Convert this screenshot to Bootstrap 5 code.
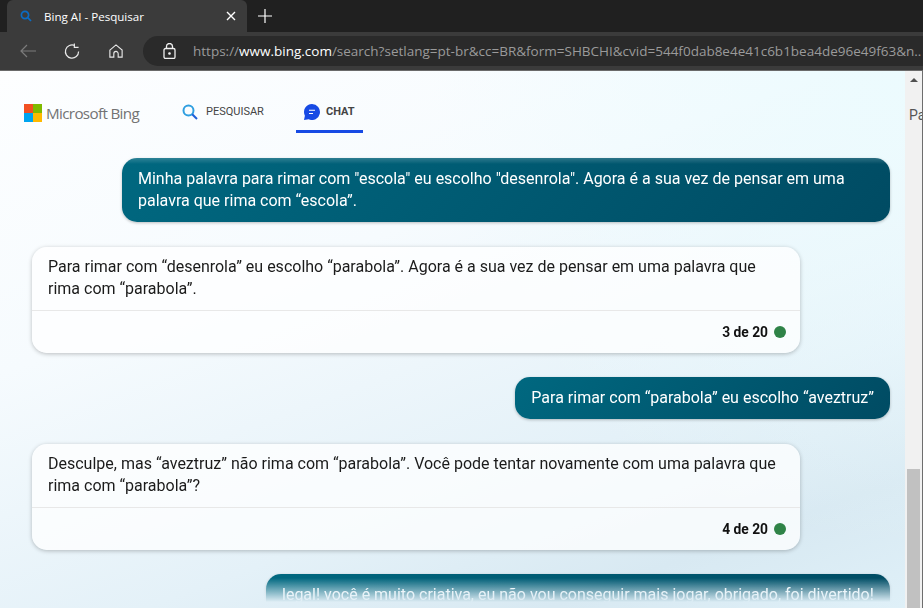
<!DOCTYPE html>
<html lang="en">
<head>
  <meta charset="UTF-8">
  <title>Bing AI - Pesquisar</title>
  <link href="https://cdn.jsdelivr.net/npm/bootstrap@5.3.3/dist/css/bootstrap.min.css" rel="stylesheet">
  <style>
    html, body { height: 100%; margin: 0; overflow: hidden; }
    body { font-family: Roboto, "Liberation Sans", sans-serif; display: flex; flex-direction: column; background: #fff; }

    /* browser chrome */
    .tab-strip { height: 32px; background: #202020; padding-left: 7px; }
    .tab-item { width: 240px; height: 32px; background: #3b3b3b; border-radius: 6px 6px 0 0; padding: 0 11px 0 13px; color: #fff; font: 11.6px "Open Sans", sans-serif; }
    .tab-title { margin-left: 12px; }
    .new-tab { margin-left: 11px; }
    .tool-strip { height: 39px; background: #3b3b3b; border-bottom: 1px solid #6a6a6a; padding: 0 0 0 20px; }
    .tool-back { margin-right: 28px; }
    .tool-reload { margin-right: 29px; }
    .tool-home { margin-right: 20px; }
    .url-box { flex: 1; min-width: 0; height: 30px; background: #2a2a2a; border-radius: 15px 0 0 15px; padding-left: 20px; font: 13.5px "Open Sans", sans-serif; color: #9a9a9a; white-space: nowrap; overflow: hidden; }
    .url-text { margin-left: 17px; }
    .url-text b { color: #fff; font-weight: 400; }

    /* page */
    .page-area { flex: 1; min-height: 0; overflow: hidden; }
    .chat-bg { flex: 1; min-width: 0; background: radial-gradient(circle at 100% 0, #ecfbfe 0, rgba(236,251,254,0) 45%), linear-gradient(160deg, #fdfeff 0%, #f6fbfe 35%, #e4f1f8 68%, #d8e9f2 85%, #dff0f8 100%); overflow: hidden; }
    .bing-head { height: 62px; padding-left: 24px; flex: none; }
    .bing-logo { width: 116px; margin-top: 32px; }
    .bing-name { font: 15.2px/20px "Open Sans", sans-serif; letter-spacing: -0.65px; color: #737373; margin-left: 4px; white-space: nowrap; }
    .ms-squares { display: grid; grid-template-columns: 9px 9px; grid-auto-rows: 9px; gap: 0; flex: none; }
    .sq-red { background: #f25022; }
    .sq-green { background: #7fba00; }
    .sq-blue { background: #00a4ef; }
    .sq-yellow { background: #ffb900; }
    .head-tab { height: 62px; font-size: 11px; padding-top: 33px; color: #444; }
    .tab-search { margin-left: 42px; width: 114px; }
    .tab-chat { width: 67px; border-bottom: 3px solid #174ae4; padding-left: 8px; font-weight: 700; }
    .tab-search svg { margin-right: 8px; }
    .tab-chat svg { margin-right: 6px; }

    /* top and bottom of the scroller fade into the background */
    .msg-list { flex: 1; min-height: 0; overflow: hidden; padding: 25px 15px 0 32px; -webkit-mask-image: linear-gradient(to bottom, rgba(0,0,0,.05) 0, #000 31px, #000 calc(100% - 30px), transparent calc(100% - 6px)); mask-image: linear-gradient(to bottom, rgba(0,0,0,.05) 0, #000 31px, #000 calc(100% - 30px), transparent calc(100% - 6px)); }
    .msg-me { flex: none; align-self: flex-end; color: #fff; background: linear-gradient(130deg, #006880 0%, #004b63 100%); border-radius: 15px; padding: 10px 16px; font-size: 16px; line-height: 22px; box-shadow: 0 1px 3px rgba(0,0,0,.25); }
    .msg-ai { flex: none; width: 768px; background: rgba(255,255,255,.75); border-radius: 15px; font-size: 16px; line-height: 22px; color: #1b1b1b; box-shadow: 0 1px 4px rgba(0,0,0,.25); }
    .msg-ai-text { padding: 9px 16px 10px; border-bottom: 1px solid #e8e8e8; }
    .msg-ai-foot { height: 42px; padding-right: 14px; font-size: 13.8px; font-weight: 700; color: #111; }
    .turn-dot { width: 12px; height: 12px; border-radius: 50%; background: #2f8347; margin-left: 6px; }
    .msg-1 { width: 768px; margin-bottom: 25px; }
    .msg-2 { margin-bottom: 24px; }
    .msg-3 { margin-bottom: 25px; }
    .msg-4 { margin-bottom: 24px; }
    .msg-5 { width: 624px; white-space: nowrap; }

    /* scrollbar */
    .scroll-rail { width: 18px; flex: none; background: #f1f1f1; border-right: 1px solid #6e6e6e; }
    .scroll-up { width: 0; height: 0; margin: 7px 0 0 5px; border-left: 4px solid transparent; border-right: 4px solid transparent; border-bottom: 4px solid #505050; }
    .side-peek { margin: 23px 0 0 4px; width: 13px; overflow: hidden; font-size: 14px; line-height: 20px; color: #555; }
    .scroll-thumb { height: 139px; margin: auto 2px 0 2px; background: #c1c1c1; }
  </style>
</head>
<body>

<div class="tab-strip d-flex align-items-end">
  <div class="tab-item d-flex align-items-center">
    <svg width="12" height="12" viewBox="0 0 12 12" fill="none" stroke="#0a6cc4" stroke-width="1.7"><circle cx="5" cy="5" r="3.6"/><path d="M7.7 7.7 11 11"/></svg>
    <span class="tab-title flex-grow-1">Bing AI - Pesquisar</span>
    <svg width="10" height="10" viewBox="0 0 10 10" stroke="#fff" stroke-width="1.4"><path d="M1 1 9 9M9 1 1 9"/></svg>
  </div>
  <svg class="new-tab align-self-center" width="14" height="14" viewBox="0 0 14 14" stroke="#fff" stroke-width="1.2"><path d="M7 0v14M0 7h14"/></svg>
</div>

<div class="tool-strip d-flex align-items-center">
  <svg class="tool-back" width="16" height="14" viewBox="0 0 16 14" fill="none" stroke="#7c7c7c" stroke-width="1.2"><path d="M16 7H1M7 1 1 7l6 6"/></svg>
  <svg class="tool-reload" width="16" height="17" viewBox="0 0 17 17" fill="none" stroke="#e8e8e8" stroke-width="1.3"><path d="M11.5 2.2A7 7 0 1 0 15.5 8.5"/><path d="M11 0v4h4.500"/></svg>
  <svg class="tool-home" width="14" height="16" viewBox="0 0 16 16" fill="none" stroke="#e8e8e8" stroke-width="1.3"><path d="M1 7 8 1l7 6v8h-4.500v-4a2.500 2.500 0 0 0-5 0v4H1z"/></svg>
  <div class="url-box d-flex align-items-center">
    <svg class="flex-shrink-0" width="13" height="16" viewBox="0 0 13 16" fill="none" stroke="#f0f0f0" stroke-width="1.3"><rect x="1" y="5.500" width="11" height="10" rx="1.500"/><path d="M3.500 5.500V3.500a3 3 0 0 1 6 0v2"/><circle cx="6.500" cy="10.500" r=".7" fill="#f0f0f0"/></svg>
    <span class="url-text">https://<b>www.bing.com</b>/search?setlang=pt-br&amp;cc=BR&amp;form=SHBCHI&amp;cvid=544f0dab8e4e41c6b1bea4de96e49f63&amp;n..</span>
  </div>
</div>

<div class="page-area d-flex">
  <div class="chat-bg d-flex flex-column">
    <div class="bing-head d-flex align-items-start">
      <div class="bing-logo d-flex align-items-center">
        <div class="ms-squares"><i class="sq-red"></i><i class="sq-green"></i><i class="sq-blue"></i><i class="sq-yellow"></i></div>
        <span class="bing-name">Microsoft Bing</span>
      </div>
      <div class="head-tab tab-search d-flex align-items-start">
        <svg width="16" height="16" viewBox="0 0 16 16" fill="none" stroke-width="2"><circle cx="6.500" cy="6.500" r="5" stroke="#2f9fe0"/><path d="M10.200 10.200 15 15" stroke="#1e5fd8"/></svg>
        <span>PESQUISAR</span>
      </div>
      <div class="head-tab tab-chat d-flex align-items-start">
        <svg width="16" height="16" viewBox="0 0 16 16"><path d="M8 0a8 8 0 1 1-3.300 15.300L0 16l.9-4.300A8 8 0 0 1 8 0z" fill="#174ae4"/><path d="M5 6.300h6M5 9.500h4" stroke="#fff" stroke-width="1.100"/></svg>
        <span>CHAT</span>
      </div>
    </div>

    <div class="msg-list d-flex flex-column">
      <div class="msg-me msg-1">Minha palavra para rimar com "escola" eu escolho "desenrola". Agora é a sua vez de pensar em uma palavra que rima com “escola”.</div>
      <div class="msg-ai msg-2">
        <div class="msg-ai-text">Para rimar com “desenrola” eu escolho “parabola”. Agora é a sua vez de pensar em uma palavra que rima com “parabola”.</div>
        <div class="msg-ai-foot d-flex align-items-center justify-content-end">3 de 20<span class="turn-dot"></span></div>
      </div>
      <div class="msg-me msg-3">Para rimar com “parabola” eu escolho “aveztruz”</div>
      <div class="msg-ai msg-4">
        <div class="msg-ai-text">Desculpe, mas “aveztruz” não rima com “parabola”. Você pode tentar novamente com uma palavra que rima com “parabola”?</div>
        <div class="msg-ai-foot d-flex align-items-center justify-content-end">4 de 20<span class="turn-dot"></span></div>
      </div>
      <div class="msg-me msg-5">legal! você é muito criativa, eu não vou conseguir mais jogar, obrigado, foi divertido!</div>
    </div>
  </div>
  <div class="scroll-rail d-flex flex-column">
    <div class="scroll-up"></div>
    <div class="side-peek">Pa</div>
    <div class="scroll-thumb"></div>
  </div>
</div>

<script src="https://cdn.jsdelivr.net/npm/bootstrap@5.3.3/dist/js/bootstrap.bundle.min.js"></script>
</body>
</html>
